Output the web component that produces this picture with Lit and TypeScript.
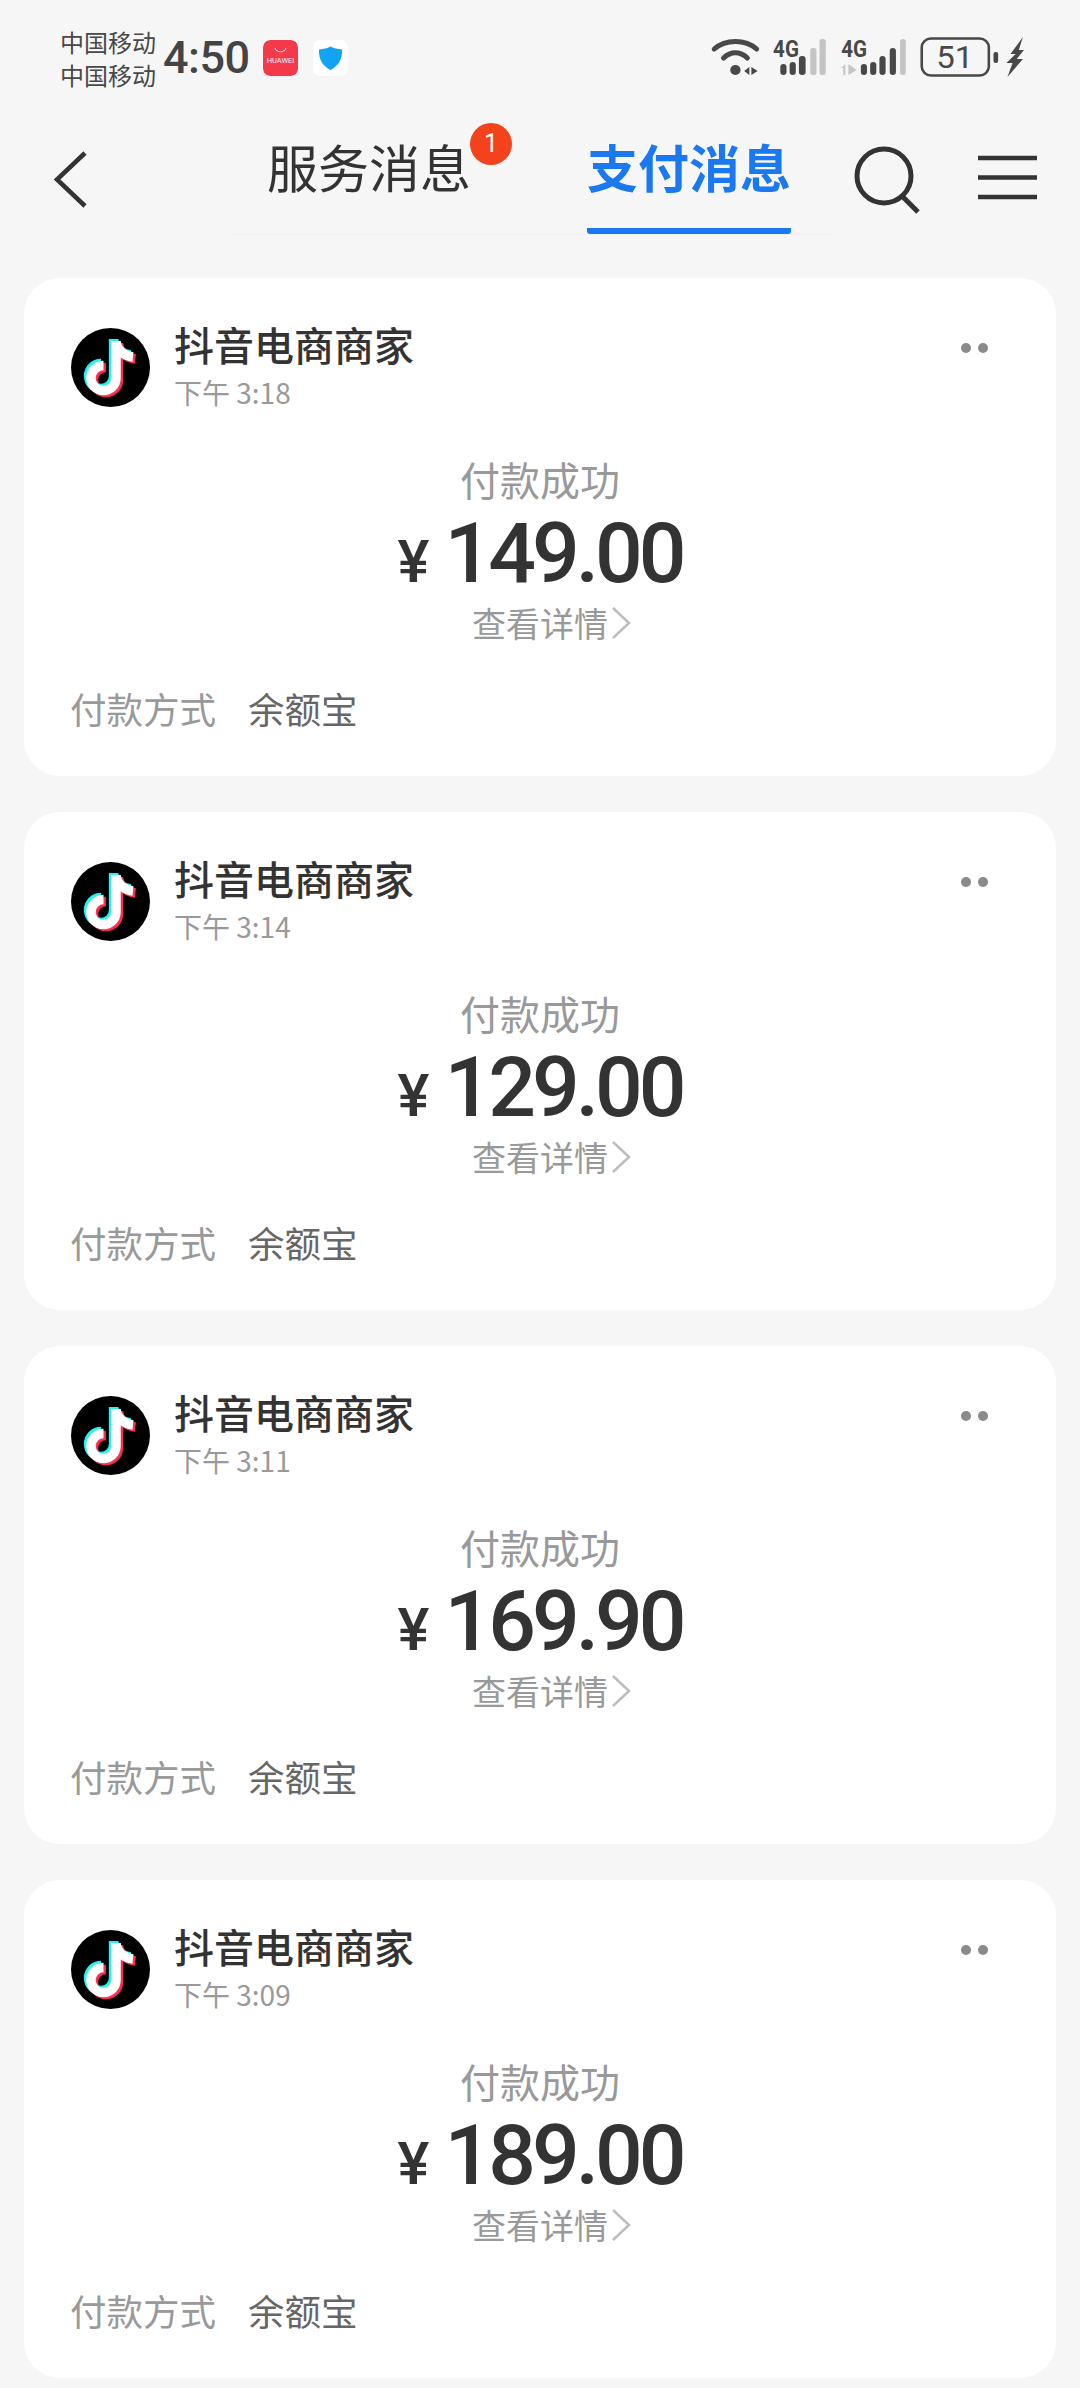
import { LitElement, html, css, svg } from "lit";
import { customElement } from "lit/decorators.js";

const notePaths = svg`
  <path d="M45 13 V50 A12.5 12.5 0 1 1 32.5 37.5" fill="none" stroke-width="9.5"/>
  <path d="M45 14 C46 22 53 28 62 29" fill="none" stroke-width="9.5"/>`;

const note = html`<svg class="avatar" viewBox="0 0 79 79">
  <circle cx="39.5" cy="39.5" r="39.5" fill="#000"/>
  <g stroke="#25f4ee" transform="translate(-2.4 -2)">${notePaths}</g>
  <g stroke="#fe2c55" transform="translate(2.4 2)">${notePaths}</g>
  <g stroke="#fff">${notePaths}</g>
</svg>`;

const payments = [
  { time: "3:18", yuan: "149.00" },
  { time: "3:14", yuan: "129.00" },
  { time: "3:11", yuan: "169.90" },
  { time: "3:09", yuan: "189.00" },
];

@customElement("app-root")
export class AppRoot extends LitElement {
  static styles = css`
    :host {
      display: block;
      width: 1080px;
      height: 2388px;
      overflow: hidden;
      background: #f6f6f6;
      font-family: "Noto Sans CJK SC", sans-serif;
      color: #333;
    }
    .status {
      height: 100px;
      display: flex;
      align-items: center;
      padding: 0 54px 0 60px;
      box-sizing: border-box;
    }
    .carriers {
      font-size: 24px;
      line-height: 33px;
      color: #484848;
      margin-top: 15px;
    }
    .clock {
      font-family: Roboto, sans-serif;
      font-size: 45px;
      font-weight: 500;
      color: #444;
      margin: 14px 0 0 7px;
      letter-spacing: -0.5px;
    }
    .app-ico {
      width: 35px;
      height: 36px;
      border-radius: 7px;
      margin: 16px 0 0 13px;
      display: block;
    }
    .app-ico + .app-ico {
      margin-left: 15px;
    }
    .sys {
      margin: 14px 0 0 auto;
      display: block;
    }
    .nav {
      height: 134px;
      display: flex;
      align-items: flex-start;
      box-sizing: border-box;
      position: relative;
    }
    .back {
      margin: 50px 0 0 52px;
      display: block;
    }
    .tabs {
      position: absolute;
      left: 233px;
      top: 0;
      width: 597px;
      height: 135px;
      border-bottom: 1.5px solid #f0f0f0;
      display: flex;
      box-sizing: border-box;
    }
    .tab {
      font-size: 51px;
      line-height: 64px;
      margin-top: 34px;
      color: #333;
      position: relative;
      height: 100px;
      box-sizing: border-box;
      white-space: nowrap;
    }
    .tab.one {
      margin-left: 34px;
    }
    .tab.two {
      margin-left: 116px;
      color: #1a78f0;
      font-weight: 700;
      border-bottom: 6px solid #1a78f0;
      border-radius: 3px;
    }
    .badge {
      position: absolute;
      left: 203px;
      top: -11px;
      width: 42px;
      height: 42px;
      border-radius: 50%;
      background: #f4421d;
      color: #fff;
      font: 400 25px/42px Roboto, sans-serif;
      text-align: center;
    }
    .search {
      position: absolute;
      left: 854px;
      top: 46px;
      display: block;
    }
    .menu {
      position: absolute;
      left: 977px;
      top: 55px;
      display: block;
    }
    .list {
      padding: 44px 24px 0;
      display: flex;
      flex-direction: column;
      gap: 36px;
    }
    .card {
      height: 498px;
      box-sizing: border-box;
      background: #fff;
      border-radius: 36px;
      padding: 50px 46px 0;
    }
    .head {
      display: flex;
      align-items: flex-start;
    }
    .avatar {
      width: 79px;
      height: 79px;
      display: block;
      flex: none;
      margin-left: 1px;
    }
    .who {
      margin-left: 24px;
      flex: 1;
    }
    .name {
      font-size: 40px;
      line-height: 50px;
      font-weight: 500;
      color: #333;
      margin-top: -9px;
    }
    .time {
      font-size: 28px;
      line-height: 36px;
      color: #999;
      margin-top: 5px;
    }
    .dots {
      display: flex;
      gap: 7px;
      margin: 15px 22px 0 0;
    }
    .dots i {
      width: 10px;
      height: 10px;
      border-radius: 50%;
      background: #8a8a8a;
    }
    .mid {
      display: flex;
      flex-direction: column;
      align-items: center;
      margin-top: 43px;
    }
    .status-text {
      font-size: 40px;
      line-height: 52px;
      color: #999;
    }
    .amount {
      display: flex;
      align-items: baseline;
      font-family: Roboto, sans-serif;
      font-weight: 500;
      color: #333;
      height: 90px;
      line-height: 90px;
      margin-top: 4px;
    }
    .yen {
      font-size: 60px;
      margin-right: 15px;
    }
    .num {
      font-size: 84px;
      letter-spacing: -4px;
    }
    .detail {
      display: flex;
      align-items: center;
      font-size: 34px;
      line-height: 44px;
      color: #999;
      margin: 2px 0 0 25px;
    }
    .detail svg {
      display: block;
      margin-left: 2px;
    }
    .pay {
      display: flex;
      gap: 32px;
      font-size: 36.5px;
      line-height: 48px;
      margin-top: 40px;
      color: #999;
    }
    .pay span:last-child {
      color: #666;
    }
  `;

  private statusIcons() {
    return html`<svg class="sys" width="320" height="42" viewBox="0 0 310 42" preserveAspectRatio="none">
      <g fill="none" stroke="#484848" stroke-width="5" stroke-linecap="round">
        <path d="M8 13 C19 3 38 3 49 13"/>
        <path d="M17 22 C24 15 33 15 40 22"/>
      </g>
      <circle cx="28.500" cy="34" r="5" fill="#484848"/>
      <path d="M37 35 L42 31 V39 Z M44 31 L50 35 L44 39 Z" fill="#484848"/>
      <text x="65" y="21" font-family="Roboto, sans-serif" font-weight="700" font-size="23" fill="#484848" textLength="25" lengthAdjust="spacingAndGlyphs">4G</text>
      <g fill="#484848">
        <rect x="72" y="28" width="6" height="11" rx="3"/><rect x="81" y="26" width="6" height="13" rx="3"/><rect x="90" y="20" width="6.500" height="19" rx="3"/>
      </g>
      <g fill="#c4c4c4">
        <rect x="101" y="12" width="6" height="27" rx="2.500"/><rect x="110" y="3" width="6" height="36" rx="2.500"/>
      </g>
      <text x="131" y="21" font-family="Roboto, sans-serif" font-weight="700" font-size="23" fill="#484848" textLength="25" lengthAdjust="spacingAndGlyphs">4G</text>
      <path d="M131 32 L135 28 V39 H133 V32 Z M138 28 L146 34 L138 39 Z" fill="#c4c4c4"/>
      <g fill="#484848">
        <rect x="150" y="28" width="6" height="11" rx="3"/><rect x="159" y="26" width="6" height="13" rx="3"/><rect x="168" y="20" width="6" height="19" rx="3"/><rect x="178" y="12" width="6" height="27" rx="3"/>
      </g>
      <rect x="188" y="3" width="5.500" height="36" rx="2.500" fill="#c4c4c4"/>
      <rect x="209" y="2.500" width="65" height="37" rx="9" fill="none" stroke="#484848" stroke-width="2.500"/>
      <text x="241" y="32" text-anchor="middle" font-family="Roboto, sans-serif" font-size="32" fill="#484848">51</text>
      <rect x="278.500" y="16" width="4.500" height="11" rx="2" fill="#484848"/>
      <path d="M307 1 L295 18 L300 18 L291 27 L297 27 L292 41 L307 23 L301 23 L308 14 L303 14 Z" fill="#484848"/>
    </svg>`;
  }

  render() {
    return html`
      <div class="status">
        <div class="carriers"><div>中国移动</div><div>中国移动</div></div>
        <div class="clock">4:50</div>
        <svg class="app-ico" viewBox="0 0 35 36">
          <rect width="35" height="36" rx="7" fill="#f4394a"/>
          <path d="M12 8 C13 13 22 13 23 8" fill="none" stroke="#fff" stroke-width="0.9"/>
          <text x="17.500" y="23" text-anchor="middle" font-family="Roboto, sans-serif" font-size="7.500" fill="#fff">HUAWEI</text>
        </svg>
        <svg class="app-ico" viewBox="0 0 35 36">
          <rect width="35" height="36" rx="7" fill="#fff"/>
          <path d="M17.500 6.500 C21 8.500 24 9 29 9.500 C29.500 20 25 26 17.500 30 C10 26 5.500 20 6 9.500 C11 9 14 8.500 17.500 6.500 Z" fill="#12a3f2"/>
        </svg>
        ${this.statusIcons()}
      </div>
      <div class="nav">
        <svg class="back" width="36" height="60" viewBox="0 0 36 60">
          <path d="M33 3 L5 29.500 L33 56" fill="none" stroke="#333" stroke-width="4.500"/>
        </svg>
        <div class="tabs">
          <div class="tab one">服务消息<span class="badge">1</span></div>
          <div class="tab two">支付消息</div>
        </div>
        <svg class="search" width="66" height="72" viewBox="0 0 66 72">
          <circle cx="30" cy="30" r="27" fill="none" stroke="#333" stroke-width="5"/>
          <path d="M48 50 L64 66" stroke="#333" stroke-width="5"/>
        </svg>
        <svg class="menu" width="60" height="46" viewBox="0 0 60 46">
          <path d="M1 3 H60 M1 22.500 H60 M1 42 H60" stroke="#333" stroke-width="4.500"/>
        </svg>
      </div>
      <div class="list">
        ${payments.map(
          (p) => html`<div class="card">
            <div class="head">
              ${note}
              <div class="who">
                <div class="name">抖音电商商家</div>
                <div class="time">下午 ${p.time}</div>
              </div>
              <div class="dots"><i></i><i></i></div>
            </div>
            <div class="mid">
              <div class="status-text">付款成功</div>
              <div class="amount"><span class="yen">¥</span><span class="num">${p.yuan}</span></div>
              <div class="detail">
                查看详情
                <svg width="23" height="34" viewBox="0 0 23 34">
                  <path d="M3 2 L19 17 L3 32" fill="none" stroke="#bdbdbd" stroke-width="2.500"/>
                </svg>
              </div>
            </div>
            <div class="pay"><span>付款方式</span><span>余额宝</span></div>
          </div>`
        )}
      </div>
    `;
  }
}
